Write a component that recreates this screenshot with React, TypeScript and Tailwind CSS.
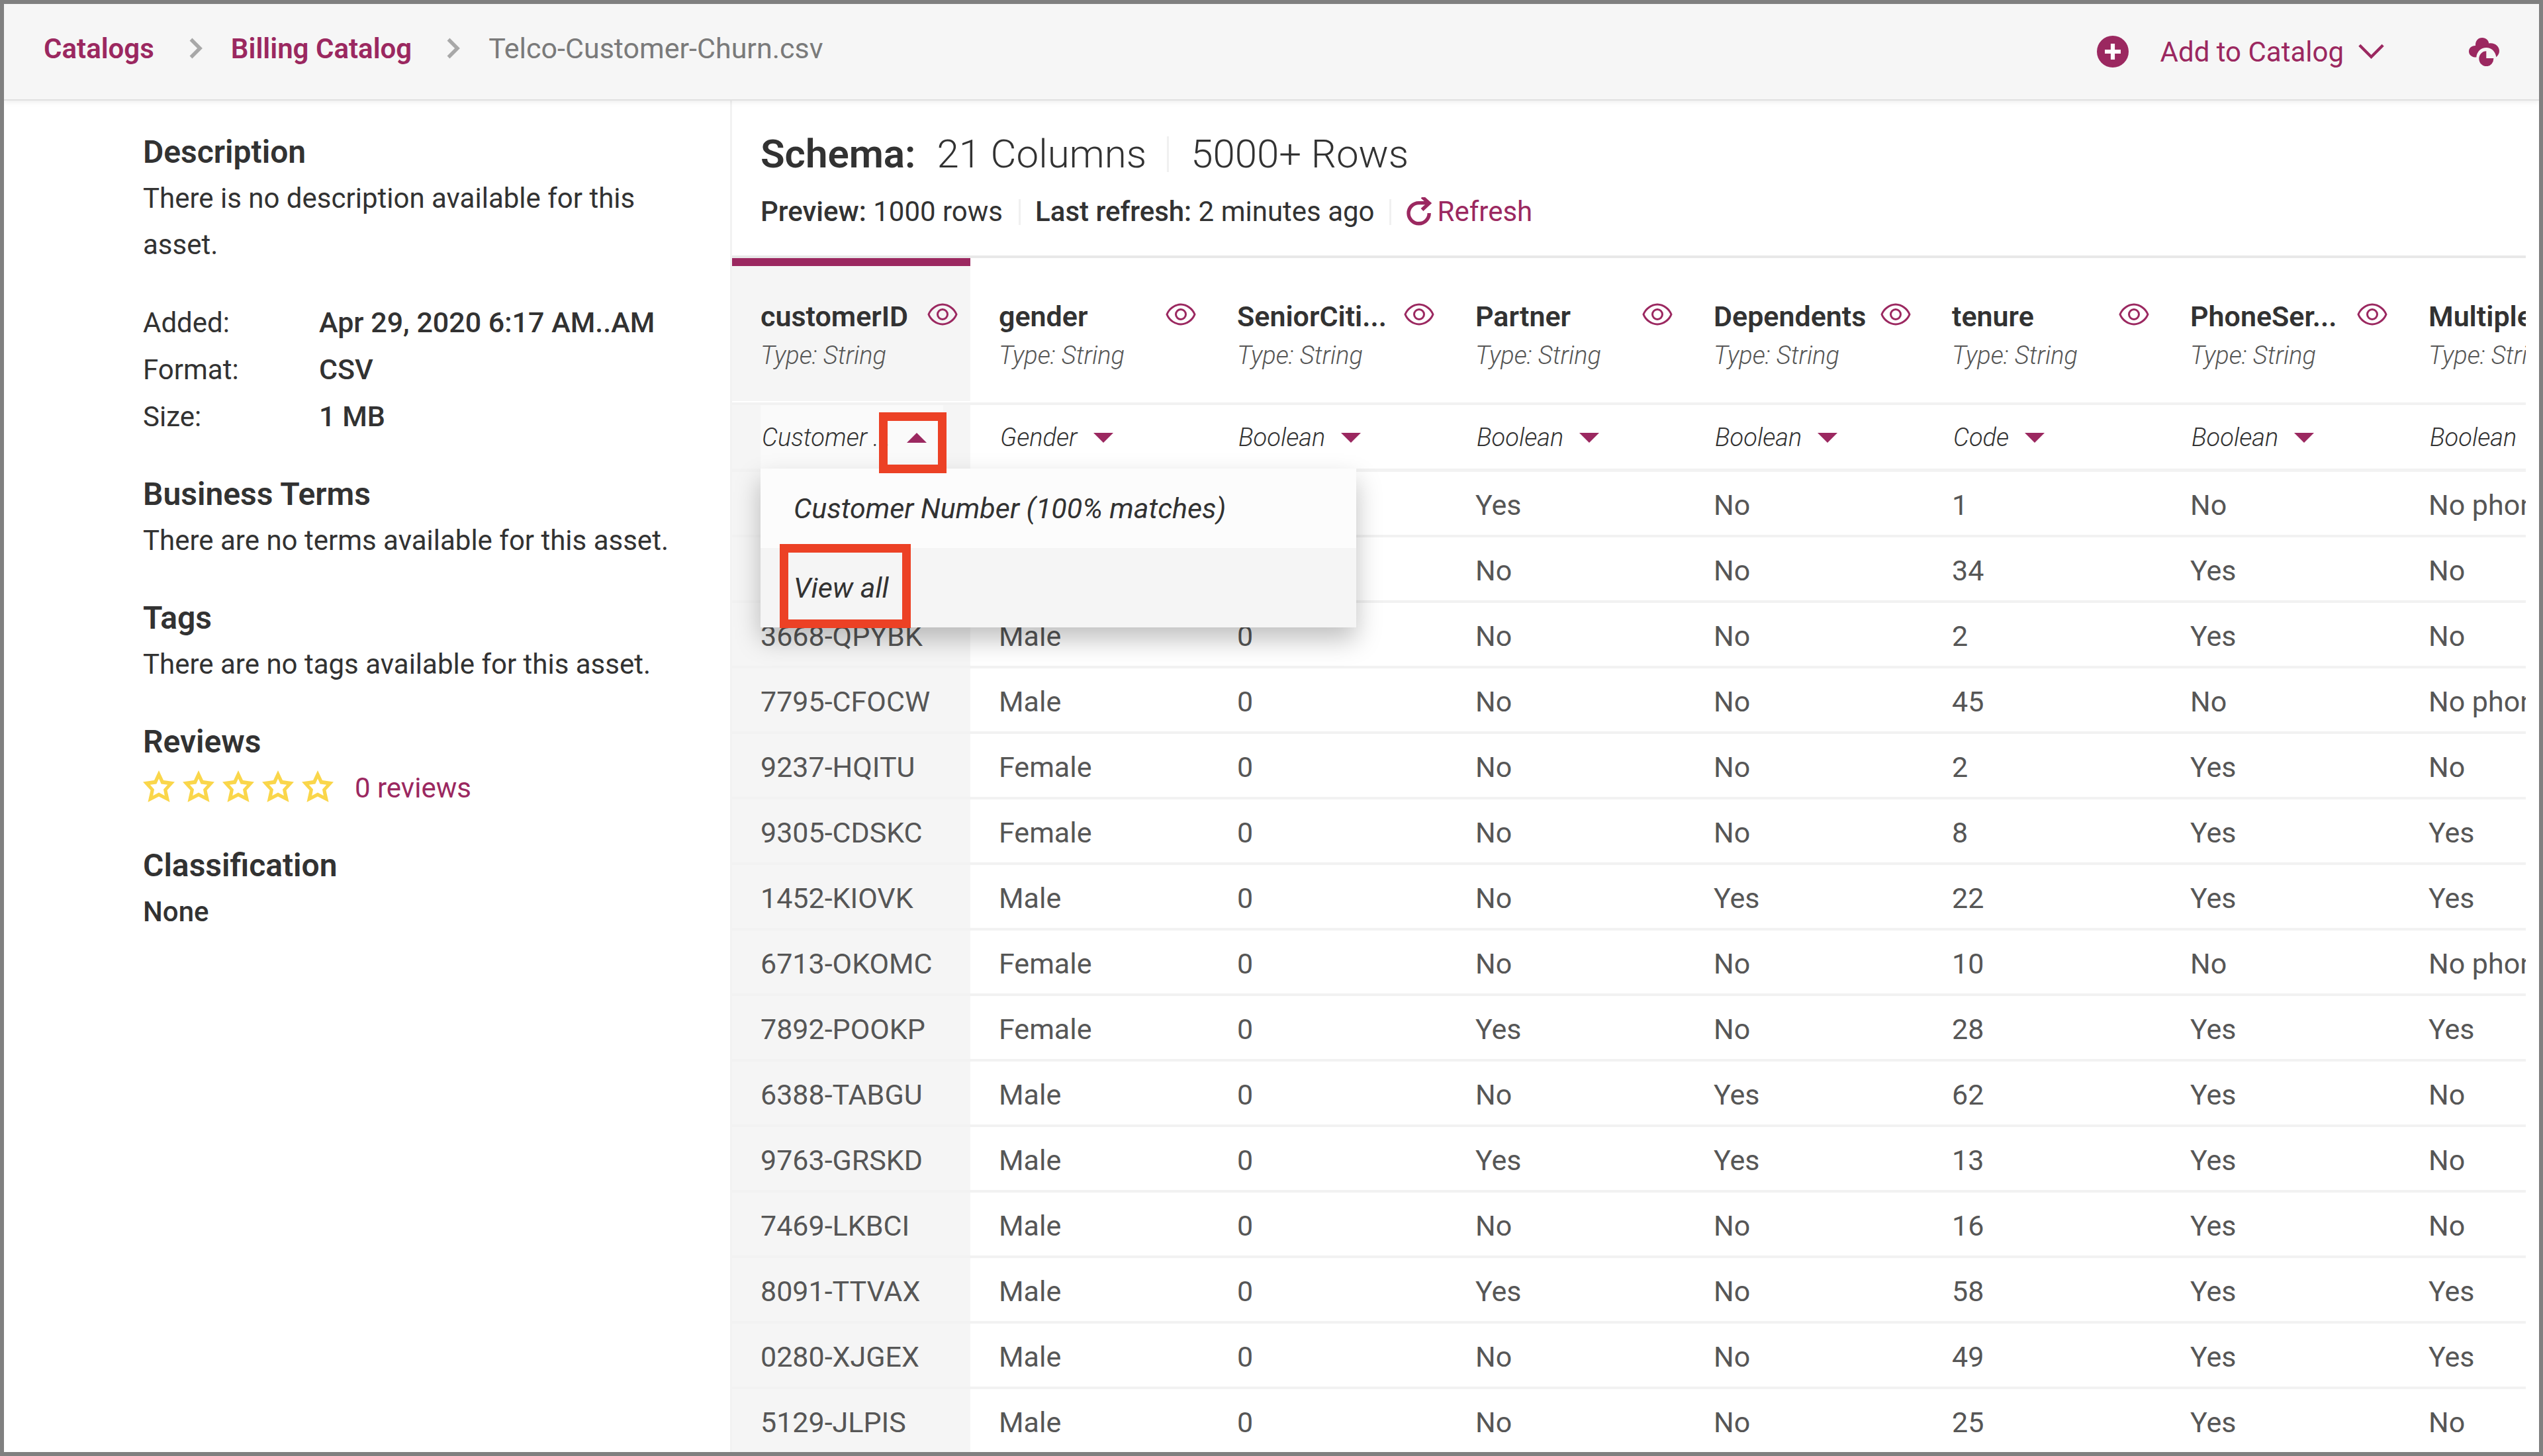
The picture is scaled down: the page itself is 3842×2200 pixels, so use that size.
import type { ReactNode } from "react";

type Column = { name: string; label: string; dataClass: string; open?: boolean };

const columns: Column[] = [
  { name: "customerID", label: "customerID", dataClass: "Customer ...", open: true },
  { name: "gender", label: "gender", dataClass: "Gender" },
  { name: "SeniorCitizen", label: "SeniorCiti...", dataClass: "Boolean" },
  { name: "Partner", label: "Partner", dataClass: "Boolean" },
  { name: "Dependents", label: "Dependents", dataClass: "Boolean" },
  { name: "tenure", label: "tenure", dataClass: "Code" },
  { name: "PhoneService", label: "PhoneSer...", dataClass: "Boolean" },
  { name: "MultipleLines", label: "MultipleL...", dataClass: "Boolean" },
];

const rows: string[][] = [
  ["", "", "", "Yes", "No", "1", "No", "No phone service"],
  ["", "", "", "No", "No", "34", "Yes", "No"],
  ["3668-QPYBK", "Male", "0", "No", "No", "2", "Yes", "No"],
  ["7795-CFOCW", "Male", "0", "No", "No", "45", "No", "No phone service"],
  ["9237-HQITU", "Female", "0", "No", "No", "2", "Yes", "No"],
  ["9305-CDSKC", "Female", "0", "No", "No", "8", "Yes", "Yes"],
  ["1452-KIOVK", "Male", "0", "No", "Yes", "22", "Yes", "Yes"],
  ["6713-OKOMC", "Female", "0", "No", "No", "10", "No", "No phone service"],
  ["7892-POOKP", "Female", "0", "Yes", "No", "28", "Yes", "Yes"],
  ["6388-TABGU", "Male", "0", "No", "Yes", "62", "Yes", "No"],
  ["9763-GRSKD", "Male", "0", "Yes", "Yes", "13", "Yes", "No"],
  ["7469-LKBCI", "Male", "0", "No", "No", "16", "Yes", "No"],
  ["8091-TTVAX", "Male", "0", "Yes", "No", "58", "Yes", "Yes"],
  ["0280-XJGEX", "Male", "0", "No", "No", "49", "Yes", "Yes"],
  ["5129-JLPIS", "Male", "0", "No", "No", "25", "Yes", "No"],
];

function CrumbChevron() {
  return (
    <svg className="ml-[53px] mr-[43px] h-[32px] w-[20px] shrink-0" viewBox="0 0 20 32" fill="none" stroke="#a8a8a8" strokeWidth="5.5" aria-hidden="true">
      <path d="M2.5 2.5 16 16 2.5 29.5" />
    </svg>
  );
}

function PlusIcon() {
  return (
    <svg className="h-[48px] w-[48px]" viewBox="0 0 48 48" aria-hidden="true">
      <circle cx="24" cy="24" r="24" fill="#9b2860" />
      <path d="M24 12v24M12 24h24" stroke="#fff" strokeWidth="6.2" />
    </svg>
  );
}

function ChevronDownIcon() {
  return (
    <svg className="h-[24px] w-[39px]" viewBox="0 0 39 24" fill="none" stroke="#9b2860" strokeWidth="4.4" aria-hidden="true">
      <path d="M1.8 2.2 19.5 20 37.2 2.2" />
    </svg>
  );
}

function CloudIcon() {
  return (
    <svg className="h-[43px] w-[46px]" viewBox="0 0 46 43" fill="#9b2860" aria-hidden="true">
      <path d="M10 12C9.6 4.500 14 0 20.200 0 25.800 0 29.600 3.600 30.200 8.400 39 7 46 12.500 46 20 46 23.600 44.300 27 41.300 29.200 40 20.500 34 15 26.300 15 18.300 15 12 21 11.300 29.500 4.800 29.900 0 26 0 20.700 0 15.600 4.200 11.800 10 12Z" />
      <path d="M26.300 20.200V31H37.300A11 11.500 0 1 1 26.300 20.200Z" />
    </svg>
  );
}

function RefreshIcon() {
  return (
    <svg className="h-[44px] w-[40px]" viewBox="0 0 40 44" fill="none" stroke="#9b2860" strokeWidth="5.4" aria-hidden="true">
      <path d="M35.200 24A15.600 15.600 0 1 1 19.500 8.600H34" />
      <path d="M24.500 -0.500 35.200 9 24.500 19" />
    </svg>
  );
}

function EyeIcon() {
  return (
    <svg className="h-[48px] w-[48px]" viewBox="0 0 32 32" fill="#9b2860" aria-hidden="true">
      <path d="M30.940 15.660A16.690 16.690 0 0 0 16 5 16.690 16.690 0 0 0 1.060 15.660a1 1 0 0 0 0 .680A16.690 16.690 0 0 0 16 27 16.690 16.690 0 0 0 30.940 16.340a1 1 0 0 0 0-.680ZM16 25c-5.300 0-10.900-3.930-12.930-9C5.100 10.930 10.700 7 16 7s10.900 3.930 12.930 9C26.900 21.070 21.300 25 16 25Z" />
      <path d="M16 10a6 6 0 1 0 6 6 6 6 0 0 0-6-6Zm0 10a4 4 0 1 1 4-4 4 4 0 0 1-4 4Z" />
    </svg>
  );
}

function StarIcon() {
  return (
    <svg className="h-[48px] w-[48px]" viewBox="0 0 48 48" fill="#fad64a" fillRule="evenodd" aria-hidden="true">
      <path d="M24 0 31 15 48 17.500 36.500 30 40.500 48 24 39.500 7.500 48 11.500 30 0 17.500 17 15ZM24 12.500 20.400 20.500 10.800 21.800 17 28.800 15.200 38.200 24 33.400 32.800 38.200 31 28.800 37.200 21.800 27.600 20.500Z" />
    </svg>
  );
}

function Caret({ up }: { up?: boolean }) {
  return (
    <svg className="h-[15px] w-[30px] shrink-0" viewBox="0 0 30 15" fill="#9b2860" aria-hidden="true">
      <path d={up ? "M0 15 15 0 30 15Z" : "M0 0H30L15 15Z"} />
    </svg>
  );
}

function Section({ title, children }: { title: string; children: ReactNode }) {
  return (
    <section>
      <h2 className="text-[48px] font-semibold leading-[70px]">{title}</h2>
      {children}
    </section>
  );
}

function Divider({ tall }: { tall?: boolean }) {
  return <span className={tall ? "h-[54px] w-[3px] bg-[#f0f0f0]" : "h-[39px] w-[3px] bg-[#f0f0f0]"} />;
}

function ClassMenu() {
  return (
    <ul className="absolute left-0 top-full z-10 w-[900px] bg-[#fcfcfc] text-[43px] font-normal italic text-[#323232] shadow-[0_18px_36px_rgba(0,0,0,0.25)]">
      <li>
        <button type="button" className="flex h-[120px] w-full items-center pl-[50px] italic">
          Customer Number (100% matches)
        </button>
      </li>
      <li className="relative bg-[#f5f5f5]">
        <button type="button" className="flex h-[120px] w-full items-center pl-[50px] italic">
          View all
        </button>
        <span className="pointer-events-none absolute -top-1.5 left-[29px] h-[127px] w-[198px] border-[13px] border-[#ec4125]" />
      </li>
    </ul>
  );
}

export default function App() {
  return (
    <div className="flex h-screen flex-col overflow-hidden border-[6px] border-[#808080] bg-white font-['Roboto',sans-serif] text-[42px] text-[#323232]">
      <header className="relative z-20 flex h-[146px] shrink-0 items-center justify-between border-b-2 border-[#e0e0e0] bg-[#f6f6f6] pl-[60px] pr-[60px] shadow-[0_2px_8px_rgba(0,0,0,0.08)]">
        <nav aria-label="Breadcrumb" className="flex items-center whitespace-nowrap pb-[10px]">
          <a href="#catalogs" className="font-semibold text-[#9b2860]">Catalogs</a>
          <CrumbChevron />
          <a href="#billing" className="font-semibold text-[#9b2860]">Billing Catalog</a>
          <CrumbChevron />
          <span className="text-[43px] text-[#7a7a7a]">Telco-Customer-Churn.csv</span>
        </nav>
        <div className="flex items-center gap-[128px]">
          <button type="button" className="flex items-center whitespace-nowrap text-[#9b2860]">
            <PlusIcon />
            <span className="ml-[48px] mr-[22px]">Add to Catalog</span>
            <ChevronDownIcon />
          </button>
          <button type="button" aria-label="Cloud status">
            <CloudIcon />
          </button>
        </div>
      </header>

      <div className="flex min-h-0 grow">
        <aside className="flex w-[1100px] shrink-0 flex-col gap-[47px] border-r-[3px] border-[#f2f2f2] pl-[210px] pr-[48px] pt-[43px] leading-[70px]">
          <Section title="Description">
            <p>There is no description available for this asset.</p>
          </Section>
          <dl className="grid grid-cols-[266px_auto] leading-[71px]">
            <dt>Added:</dt>
            <dd className="whitespace-nowrap text-[43px] font-medium">Apr 29, 2020 6:17 AM..AM</dd>
            <dt>Format:</dt>
            <dd className="text-[43px] font-medium">CSV</dd>
            <dt>Size:</dt>
            <dd className="text-[43px] font-medium">1 MB</dd>
          </dl>
          <Section title="Business Terms">
            <p className="whitespace-nowrap">There are no terms available for this asset.</p>
          </Section>
          <Section title="Tags">
            <p className="whitespace-nowrap">There are no tags available for this asset.</p>
          </Section>
          <Section title="Reviews">
            <div className="flex items-center">
              <div role="img" aria-label="0 out of 5 stars" className="mr-[32px] flex gap-3 pb-1.5">
                <StarIcon />
                <StarIcon />
                <StarIcon />
                <StarIcon />
                <StarIcon />
              </div>
              <a href="#reviews" className="text-[#9b2860]">0 reviews</a>
            </div>
          </Section>
          <Section title="Classification">
            <p className="font-medium">None</p>
          </Section>
        </aside>

        <main className="mr-[20px] min-w-0 grow overflow-hidden">
          <div className="border-b-4 border-[#e8e8e8] pb-[31px] pl-[43px] pt-[41px]">
            <h1 className="flex items-center whitespace-nowrap text-[60px] font-light leading-[80px]">
              <span className="mr-[32px] font-semibold">Schema:</span>
              <span className="mr-[31px]">21 Columns</span>
              <Divider tall />
              <span className="ml-[33px]">5000+ Rows</span>
            </h1>
            <div className="mt-3 flex items-center whitespace-nowrap leading-[70px]">
              <span className="mr-6"><span className="font-medium">Preview:</span> 1000 rows</span>
              <Divider />
              <span className="mx-[22px]"><span className="font-medium">Last refresh:</span> 2 minutes ago</span>
              <Divider />
              <button type="button" className="ml-[22px] flex items-center gap-2 text-[#9b2860]">
                <RefreshIcon />
                Refresh
              </button>
            </div>
          </div>

          <table className="w-[2880px] table-fixed border-separate border-spacing-0 text-left text-[43px]">
            <thead>
              <tr>
                {columns.map((c) => (
                  <th
                    key={c.name}
                    scope="col"
                    className={
                      c.open
                        ? "h-[222px] border-b-4 border-t-[12px] border-b-[#f2f2f2] border-t-[#9b2860] bg-[#f5f5f5] pl-[43px] pr-[18px] pt-[46px] align-top font-normal shadow-[inset_0_-2px_0_#fff]"
                        : "h-[222px] border-b-4 border-t-[12px] border-b-[#f2f2f2] border-t-transparent pl-[43px] pr-[18px] pt-[46px] align-top font-normal"
                    }
                  >
                    <div className="flex items-start justify-between whitespace-nowrap">
                      <span title={c.name} className="font-semibold leading-[60px]">{c.label}</span>
                      <button type="button" aria-label={`Show ${c.name}`} className="flex h-[54px] items-center">
                        <EyeIcon />
                      </button>
                    </div>
                    <div className="text-[38px] font-light italic leading-[58px] text-[#565656]">Type: String</div>
                  </th>
                ))}
              </tr>
              <tr>
                {columns.map((c) => (
                  <th
                    key={c.name}
                    className={
                      c.open
                        ? "h-[101px] border-b-[5px] border-[#f2f2f2] bg-[#f5f5f5] p-0 pl-[43px]"
                        : "h-[101px] border-b-[5px] border-[#f2f2f2] p-0 pl-[43px]"
                    }
                  >
                    <div className="relative w-[276px]">
                      <button
                        type="button"
                        aria-expanded={!!c.open}
                        className={
                          c.open
                            ? "flex h-[96px] w-full items-center gap-6 whitespace-nowrap bg-[#fafafa] pl-0.5 pt-0.5 text-[38px] font-light italic"
                            : "flex h-[96px] w-full items-center gap-6 whitespace-nowrap pl-0.5 pt-0.5 text-[38px] font-light italic"
                        }
                      >
                        {c.dataClass}
                        <Caret up={c.open} />
                      </button>
                      {c.open && <ClassMenu />}
                      {c.open && (
                        <span className="pointer-events-none absolute left-[179px] top-[11px] z-10 h-[92px] w-[102px] border-[13px] border-[#ec4125]" />
                      )}
                    </div>
                  </th>
                ))}
              </tr>
            </thead>
            <tbody className="text-[#565656]">
              {rows.map((r, n) => (
                <tr key={n}>
                  {r.map((v, i) => (
                    <td
                      key={i}
                      className={
                        i === 0
                          ? "h-[99px] whitespace-nowrap border-b-4 border-[#f2f2f2] bg-[#f5f5f5] p-0 pl-[43px] pt-1.5"
                          : "h-[99px] whitespace-nowrap border-b-4 border-[#f2f2f2] p-0 pl-[43px] pt-1.5"
                      }
                    >
                      {v}
                    </td>
                  ))}
                </tr>
              ))}
            </tbody>
          </table>
        </main>
      </div>
    </div>
  );
}
